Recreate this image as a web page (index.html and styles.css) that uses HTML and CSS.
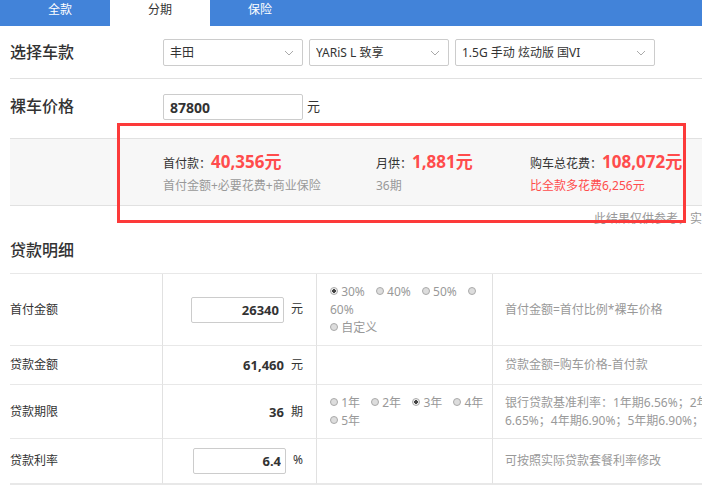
FILE: index.html
```html
<!DOCTYPE html>
<html lang="zh-CN">
<head>
  <meta charset="UTF-8">
  <meta name="viewport" content="width=device-width, initial-scale=1">
  <title>分期</title>
  <link rel="stylesheet" href="styles.css">
</head>
<body>

  <nav class="tabs">
    <a href="#full">全款</a>
    <a href="#loan" class="active">分期</a>
    <a href="#insurance">保险</a>
  </nav>

  <main class="page">
    <section class="form-row">
      <h2>选择车款</h2>
      <div class="selects">
        <select class="brand" aria-label="品牌"><option>丰田</option></select>
        <select class="series" aria-label="车系"><option>YARiS L 致享</option></select>
        <select class="model" aria-label="车型"><option>1.5G 手动 炫动版 国VI</option></select>
      </div>
    </section>

    <section class="form-row price-row">
      <h2><label for="price">裸车价格</label></h2>
      <input class="price" id="price" type="text" value="87800">
      <span class="price-unit">元</span>
    </section>

    <div class="result">
      <section class="summary">
        <div>
          <p>首付款：<strong>40,356元</strong></p>
          <p class="sub">首付金额+必要花费+商业保险</p>
        </div>
        <div>
          <p>月供：<strong>1,881元</strong></p>
          <p class="sub">36期</p>
        </div>
        <div>
          <p>购车总花费：<strong>108,072元</strong></p>
          <p class="sub more">比全款多花费6,256元</p>
        </div>
      </section>
      <div class="highlight"></div>
    </div>
    <p class="note">此结果仅供参考，实</p>

    <h2 class="detail-title">贷款明细</h2>
    <table class="detail">
      <tr class="down">
        <th scope="row"><label for="down">首付金额</label></th>
        <td class="amount"><div><input id="down" type="text" value="26340"><span>元</span></div></td>
        <td class="options">
          <input type="radio" name="ratio" id="r30" checked> <label for="r30">30%</label>
          <input type="radio" name="ratio" id="r40"> <label for="r40">40%</label>
          <input type="radio" name="ratio" id="r50"> <label for="r50">50%</label>
          <input type="radio" name="ratio" id="r60"> <label for="r60">60%</label><br>
          <input type="radio" name="ratio" id="custom"> <label for="custom">自定义</label>
        </td>
        <td class="help">首付金额=首付比例*裸车价格</td>
      </tr>
      <tr class="total">
        <th scope="row">贷款金额</th>
        <td class="amount"><div><b>61,460</b><span>元</span></div></td>
        <td class="options"></td>
        <td class="help">贷款金额=购车价格-首付款</td>
      </tr>
      <tr class="term">
        <th scope="row">贷款期限</th>
        <td class="amount"><div><b>36</b><span>期</span></div></td>
        <td class="options">
          <input type="radio" name="years" id="y1"> <label for="y1">1年</label>
          <input type="radio" name="years" id="y2"> <label for="y2">2年</label>
          <input type="radio" name="years" id="y3" checked> <label for="y3">3年</label>
          <input type="radio" name="years" id="y4"> <label for="y4">4年</label>
          <input type="radio" name="years" id="y5"> <label for="y5">5年</label>
        </td>
        <td class="help">银行贷款基准利率：1年期6.56%；2年<br>6.65%；4年期6.90%；5年期6.90%；</td>
      </tr>
      <tr class="rate">
        <th scope="row"><label for="rate">贷款利率</label></th>
        <td class="amount"><div><input id="rate" type="text" value="6.4"><span>%</span></div></td>
        <td class="options"></td>
        <td class="help">可按照实际贷款套餐利率修改</td>
      </tr>
    </table>
  </main>

</body>
</html>
```

FILE: styles.css
```css
* {
  box-sizing: border-box;
}
body {
  margin: 0;
  font: 12px/18px "Noto Sans", "Noto Sans CJK SC", sans-serif;
  color: #333;
  background: #fff;
  overflow-x: hidden;
}
h2, p {
  margin: 0;
}
h2 {
  font-size: 16px;
  font-weight: 500;
  line-height: 26px;
}
input, select {
  font: inherit;
  color: #333;
  background: #fff;
  border: 1px solid #ccc;
  border-radius: 2px;
}

/* tabs */
.tabs {
  display: flex;
  height: 26px;
  padding-left: 10px;
  background: #4283d9;
}
.tabs a {
  width: 100px;
  color: #fff;
  line-height: 20px;
  text-align: center;
  text-decoration: none;
}
.tabs .active {
  color: #333;
  background: #fff;
}

.page {
  padding-left: 10px;
}
.form-row {
  display: grid;
  grid-template-columns: 153px auto 1fr;
  padding: 13px 0 12px;
}
.selects {
  display: flex;
  gap: 6px;
}
select {
  height: 27px;
  padding: 0 6px;
  appearance: none;
  background: #fff url("data:image/svg+xml,%3Csvg xmlns='http://www.w3.org/2000/svg' width='10' height='6'%3E%3Cpath d='M1 1l4 4 4-4' fill='none' stroke='%23aaa'/%3E%3C/svg%3E") no-repeat right 8px center;
}
.brand, .series {
  width: 140px;
}
.model {
  width: 200px;
}
.price-row {
  padding: 15px 0 18px;
  border-top: 1px solid #e1e1e1;
}
.price-row h2 {
  line-height: 24px;
}
.price {
  width: 140px;
  height: 26px;
  padding: 0 6px;
  font-size: 14px;
  font-weight: bold;
}
.price-unit {
  padding-left: 4px;
  font-size: 13px;
  line-height: 24px;
}

/* result */
.result {
  position: relative;
}
.summary {
  display: grid;
  grid-template-columns: 213px 154px 1fr;
  padding: 14px 0 8px 153px;
  background: #f7f7f7;
  border: solid #e1e1e1;
  border-width: 1px 0;
  white-space: nowrap;
}
.summary p {
  line-height: 22px;
}
.summary strong {
  font-size: 17px;
  line-height: 18px;
  color: #ff4c4c;
}
.summary .sub {
  color: #999;
}
.summary .more {
  color: #ff4c4c;
}
.highlight {
  position: absolute;
  top: -15px;
  right: 16px;
  bottom: -17px;
  left: 107px;
  border: 3px solid #fc3a3a;
  pointer-events: none;
}
.note {
  margin-top: 4px;
  padding-left: 584px;
  color: #999;
  white-space: nowrap;
}

/* loan detail */
.detail-title {
  margin: 9px 0 10px;
}
.detail {
  width: 100%;
  table-layout: fixed;
  border-spacing: 0;
  border-top: 1px solid #e8e8e8;
  border-bottom: 1px solid #e8e8e8;
}
.detail th, .detail td {
  padding: 0;
  border-bottom: 1px solid #e8e8e8;
}
.detail th {
  width: 153px;
  font-weight: normal;
  text-align: left;
  border-right: 1px solid #e1e1e1;
}
.down {
  height: 72px;
}
.total {
  height: 39px;
}
.term {
  height: 54px;
}
.rate {
  height: 45px;
}
.detail .amount {
  width: 154px;
  padding-right: 13px;
  border-right: 1px solid #e1e1e1;
}
.amount div {
  display: flex;
  justify-content: flex-end;
  gap: 7px;
}
.amount b, .amount input {
  font-size: 13px;
  font-weight: bold;
}
.amount input {
  width: 93px;
  height: 26px;
  padding: 0 4px;
  text-align: right;
}
.amount input + span {
  line-height: 24px;
}
.detail .options {
  width: 176px;
  padding-left: 13px;
  color: #999;
  border-right: 1px solid #e1e1e1;
}
.options input {
  width: 8px;
  height: 8px;
  margin: 0;
  appearance: none;
  background: #ddd;
  border: 1px solid #aaa;
  border-radius: 50%;
  vertical-align: 1px;
}
.options input:checked {
  background: radial-gradient(#444 0 2px, #eee 2px);
}
.options label {
  margin-right: 8px;
}
.detail .help {
  padding-left: 12px;
  color: #999;
  white-space: nowrap;
}
```
